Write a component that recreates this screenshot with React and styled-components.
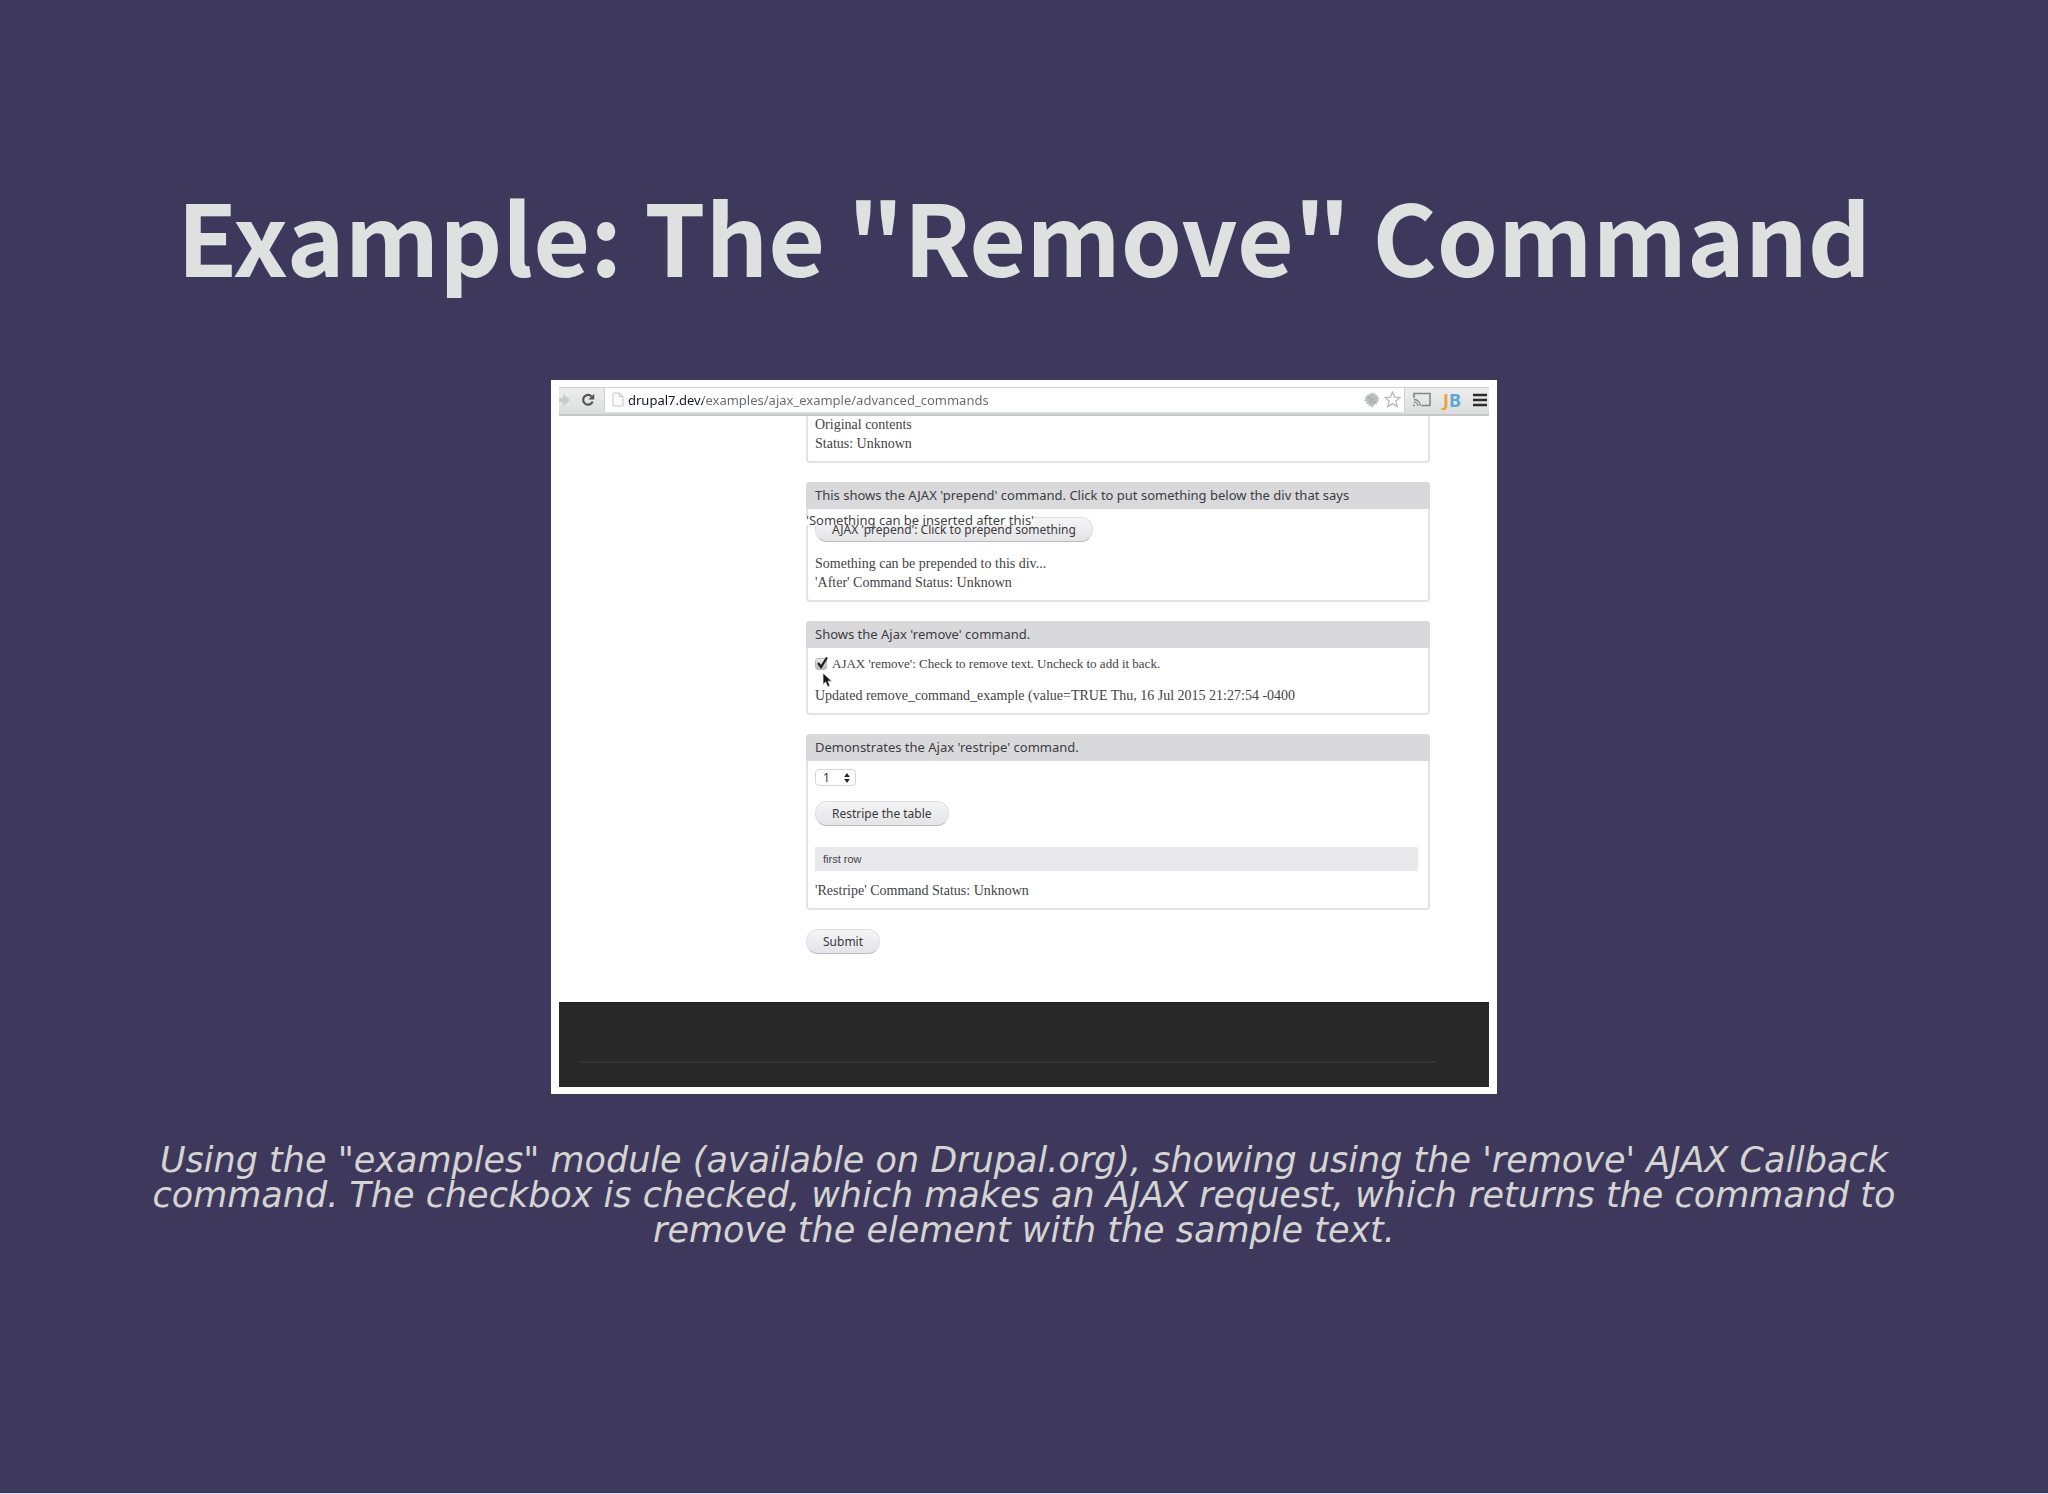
import React, { useState } from 'react';
import styled, { createGlobalStyle } from 'styled-components';

const App = () => {
  return (
    <>
      <GlobalStyle />
      <Slide>
        <Title>Example: The "Remove" Command</Title>
        <Frame>
          <Toolbar />
          <DemoPage />
          <PageFooter>
            <hr />
          </PageFooter>
        </Frame>
        <Caption>
          Using the "examples" module (available on Drupal.org), showing using
          the 'remove' AJAX Callback command. The checkbox is checked, which
          makes an AJAX request, which returns the command to remove the element
          with the sample text.
        </Caption>
      </Slide>
    </>
  );
};

export default App;

const Toolbar = () => {
  const [url, setUrl] = useState(
    'drupal7.dev/examples/ajax_example/advanced_commands'
  );
  return (
    <Bar>
      <Forward aria-label='Forward'>
        <svg width='11' height='14' viewBox='0 0 11 14'>
          <path d='M0 5h4V1l7 6-7 6V9H0z' fill='#c9cbca' />
        </svg>
      </Forward>
      <Reload aria-label='Reload'>
        <svg width='14' height='14' viewBox='0 0 14 14'>
          <path
            d='M10.6 3.4A4.9 4.9 0 1 0 11.6 8.6'
            fill='none'
            stroke='#555'
            strokeWidth='2.2'
          />
          <path d='M13.2 0.8v5.8H7.4z' fill='#555' />
        </svg>
      </Reload>
      <AddressBox>
        <svg width='12' height='15' viewBox='0 0 12 15'>
          <path
            d='M1 1h6.5L11 4.500V14H1z M7.500 1v3.500H11'
            fill='#fafafa'
            stroke='#c4c5c8'
          />
        </svg>
        <Address
          aria-label='Address'
          value={url}
          onChange={(e) => setUrl(e.target.value)}
        />
        <IconButton aria-label='Extension'>
          <svg width='16' height='16' viewBox='0 0 16 16'>
            <path
              d='M8 0l1.200 2 2-1 .5 2.200 2.300-.2-.6 2.200 2.200.8-1.600 1.700L15 9.500l-2.200.6.3 2.300-2.200-.5L9.500 14 8 16l-1-2.300L4.500 14l.2-2.200-2.700.2 1-2.200L0 8.500 1.800 7 .6 5l2.300-.4L2.700 2.500l2.200.4L6 .8l1.200 1.500z'
              fill='#bcbdbe'
            />
            <path d='M4 5l3 2M6 11l3-5M9 11l3-2' stroke='#9a9b9c' />
          </svg>
        </IconButton>
        <IconButton aria-label='Bookmark'>
          <svg width='17' height='17' viewBox='0 0 17 17'>
            <path
              d='M8.500 1l2.100 5.100 5.400.4-4.100 3.600 1.300 5.400-4.700-2.900-4.700 2.900 1.300-5.400L1 6.500l5.400-.4z'
              fill='#fff'
              stroke='#b9babb'
              strokeWidth='1.300'
            />
          </svg>
        </IconButton>
      </AddressBox>
      <Tools>
        <IconButton aria-label='Cast'>
          <svg width='18' height='15' viewBox='0 0 18 15'>
            <path
              d='M1 6V1.500h16v12H8.500'
              fill='none'
              stroke='#858686'
              strokeWidth='1.600'
            />
            <path
              d='M1 7.500a6.500 6.500 0 0 1 6.500 6.500M1 10.200a3.800 3.800 0 0 1 3.800 3.800'
              fill='none'
              stroke='#858686'
              strokeWidth='1.300'
            />
            <path d='M0 12.200a2 2 0 0 1 2 2H0z' fill='#858686' />
          </svg>
        </IconButton>
        <Monogram>
          J<span>B</span>
        </Monogram>
        <IconButton aria-label='Menu'>
          <svg width='14' height='14' viewBox='0 0 14 14'>
            <path d='M0 2h14M0 7h14M0 12h14' stroke='#2c2c2c' strokeWidth='2.400' />
          </svg>
        </IconButton>
      </Tools>
    </Bar>
  );
};

const DemoPage = () => {
  const [removed, setRemoved] = useState(true);
  return (
    <Page>
      <Panel $scrolled>
        <Body $flush>
          <Text>Original contents</Text>
          <Text>Status: Unknown</Text>
        </Body>
      </Panel>

      <Panel>
        <Legend>
          This shows the AJAX 'prepend' command. Click to put something below
          the div that says
        </Legend>
        <Overlap>'Something can be inserted after this'</Overlap>
        <Body>
          <PillButton>AJAX 'prepend': Click to prepend something</PillButton>
          <Group $gap={12}>
            <Text>Something can be prepended to this div...</Text>
            <Text>'After' Command Status: Unknown</Text>
          </Group>
        </Body>
      </Panel>

      <Panel>
        <Legend>Shows the Ajax 'remove' command.</Legend>
        <Body>
          <CheckLabel>
            <Tick>
              <input
                type='checkbox'
                checked={removed}
                onChange={() => setRemoved(!removed)}
              />
              {removed && (
                <svg width='14' height='14' viewBox='0 0 14 14'>
                  <path
                    d='M3 7l3 4L12 1.500'
                    fill='none'
                    stroke='#1d1d1f'
                    strokeWidth='2.200'
                  />
                </svg>
              )}
            </Tick>
            AJAX 'remove': Check to remove text. Uncheck to add it back.
            <Pointer width='11' height='16' viewBox='0 0 11 16'>
              <path
                d='M1 1v11.500l2.700-2.500 2 4.700 2.300-1-2-4.500h3.800z'
                fill='#151515'
                stroke='#e8e8e8'
                strokeWidth='.8'
              />
            </Pointer>
          </CheckLabel>
          <Group $gap={15}>
            <Text>
              Updated remove_command_example (value=TRUE Thu, 16 Jul 2015
              21:27:54 -0400
            </Text>
          </Group>
        </Body>
      </Panel>

      <Panel>
        <Legend>Demonstrates the Ajax 'restripe' command.</Legend>
        <Body>
          <SelectWrap>
            <select aria-label='Number of rows' defaultValue='1'>
              <option>1</option>
              <option>2</option>
              <option>3</option>
            </select>
            <svg width='6' height='10' viewBox='0 0 6 10'>
              <path d='M3 0l2.800 4H.2zM3 10L.2 6h5.600z' fill='#222' />
            </svg>
          </SelectWrap>
          <Group $gap={15}>
            <PillButton>Restripe the table</PillButton>
          </Group>
          <Group $gap={21}>
            <Rows>
              <tbody>
                <tr>
                  <td>first row</td>
                </tr>
              </tbody>
            </Rows>
          </Group>
          <Group $gap={10}>
            <Text>'Restripe' Command Status: Unknown</Text>
          </Group>
        </Body>
      </Panel>

      <PillButton>Submit</PillButton>
    </Page>
  );
};

const GlobalStyle = createGlobalStyle`
  * {
    box-sizing: border-box;
  }

  body {
    margin: 0;
    background-color: #dcdaf0;
  }
`;

const Slide = styled.main`
  display: flex;
  flex-direction: column;
  align-items: center;
  min-height: calc(100vh - 1px);
  padding: 174px 144px 48px;
  background-color: #3e395c;
`;

const Title = styled.h1`
  margin: 0 0 86px;
  color: #dfe0e0;
  font-family: 'Noto Sans CJK JP', 'Noto Sans', sans-serif;
  font-size: 98px;
  font-weight: 700;
  line-height: 120px;
  text-align: center;
`;

const Frame = styled.section`
  width: 100%;
  max-width: 946px;
  padding: 7px 8px;
  background-color: #fff;
`;

const Caption = styled.p`
  margin: 49px 0 0;
  color: #d4d4d2;
  font-family: 'DejaVu Sans', sans-serif;
  font-size: 35px;
  font-style: italic;
  line-height: 35px;
  text-align: center;
`;

const Bar = styled.div`
  display: flex;
  align-items: center;
  height: 29px;
  padding-bottom: 3px;
  position: relative;
  z-index: 1;
  background-image: linear-gradient(#ededed, #dcdedd);
  border-top: 1px solid #cfd1d0;
  border-bottom: 2px solid #c6c8c7;
`;

const IconButton = styled.button`
  display: flex;
  padding: 0;
  border: 0;
  background: none;
`;

const Forward = styled(IconButton)`
  width: 22px;
`;

const Reload = styled(IconButton)`
  width: 23px;
`;

const AddressBox = styled.div`
  display: flex;
  align-items: center;
  flex: 1;
  gap: 4px;
  height: 24px;
  padding: 0 3px 0 7px;
  background-color: #fff;
  border-left: 1px solid #cfd1d0;
  border-right: 1px solid #cfd1d0;
`;

const Address = styled.input`
  flex: 1;
  min-width: 0;
  height: 20px;
  padding: 0;
  border: 0;
  outline: 0;
  /* the host name is darker than the path */
  color: transparent;
  background-image: linear-gradient(90deg, #14142a 75px, #66676a 75px);
  background-clip: text;
  caret-color: #222;
  font-family: 'Noto Sans', sans-serif;
  font-size: 13px;
`;

const Tools = styled.div`
  display: flex;
  align-items: center;
  gap: 12px;
  padding: 0 2px 0 8px;
`;

const Monogram = styled(IconButton)`
  color: #f0a03c;
  font-family: 'Noto Sans', sans-serif;
  font-size: 18px;
  font-weight: 700;
  line-height: 20px;

  span {
    color: #5aa8d6;
  }
`;

const Page = styled.div`
  padding: 0 59px 48px 247px;
  color: #434346;
`;

const Panel = styled.fieldset`
  position: relative;
  min-width: 0;
  margin: ${(props) => (props.$scrolled ? '-1px 0 19px' : '0 0 19px')};
  padding: 0;
  border: 2px solid #e3e3e7;
  border-top: 0;
  border-radius: ${(props) => (props.$scrolled ? '0 0 4px 4px' : '4px')};
`;

const Legend = styled.div`
  margin: 0 -2px;
  padding: 0 9px;
  background-color: #d9d9dc;
  border-radius: 4px 4px 0 0;
  color: #3c3c3f;
  font-family: 'Noto Sans', sans-serif;
  font-size: 13px;
  line-height: 27px;
`;

const Body = styled.div`
  padding: ${(props) => (props.$flush ? '0 10px 8px 7px' : '8px 10px 8px 7px')};
`;

const Group = styled.div`
  margin-top: ${(props) => props.$gap}px;
`;

const Text = styled.p`
  margin: 0;
  font-family: 'Liberation Serif', serif;
  font-size: 14px;
  line-height: 19px;
`;

/* floats over the top edge of the prepend button */
const Overlap = styled.div`
  position: absolute;
  top: 34px;
  left: -2px;
  background-color: #fff;
  font-family: 'Noto Sans', sans-serif;
  font-size: 13px;
  line-height: 9px;
`;

const PillButton = styled.button`
  display: block;
  height: 25px;
  padding: 0 16px;
  border: 1px solid #e0e0e3;
  border-bottom-color: #bdbdc1;
  border-radius: 12px;
  background-image: linear-gradient(#f5f5f7, #e4e4e7);
  color: #3a3a3c;
  font-family: 'Noto Sans', sans-serif;
  font-size: 12px;
  line-height: 20px;
`;

const CheckLabel = styled.label`
  display: flex;
  align-items: center;
  gap: 5px;
  position: relative;
  font-family: 'Liberation Serif', serif;
  font-size: 13px;
  line-height: 15px;
`;

const Tick = styled.span`
  display: flex;
  position: relative;

  input {
    appearance: none;
    width: 12px;
    height: 12px;
    margin: 0;
    border: 1px solid #b9bcc0;
    border-radius: 3px;
    background-image: linear-gradient(#e9ebed, #b4b8bc);
  }

  svg {
    position: absolute;
    top: -2px;
    left: 0;
  }
`;

const Pointer = styled.svg`
  position: absolute;
  top: 16px;
  left: 7px;
`;

const SelectWrap = styled.div`
  display: flex;
  position: relative;
  width: 41px;

  select {
    appearance: none;
    width: 100%;
    height: 17px;
    padding: 0 7px;
    border: 1px solid #d3d3d8;
    border-radius: 4px;
    background-color: #fff;
    color: #333;
    font-family: 'Noto Sans', sans-serif;
    font-size: 12px;
    line-height: 15px;
  }

  svg {
    position: absolute;
    top: 4px;
    right: 6px;
    pointer-events: none;
  }
`;

const Rows = styled.table`
  width: 100%;
  border-collapse: collapse;

  td {
    height: 24px;
    padding: 0 8px;
    background-color: #e9e9eb;
    font-family: 'Liberation Sans', sans-serif;
    font-size: 11px;
  }
`;

const PageFooter = styled.footer`
  height: 85px;
  padding: 58px 53px 0 22px;
  background-color: #282829;
  border-top: 1px solid #202021;

  hr {
    height: 2px;
    margin: 0;
    border: 0;
    background-color: #343435;
  }
`;
